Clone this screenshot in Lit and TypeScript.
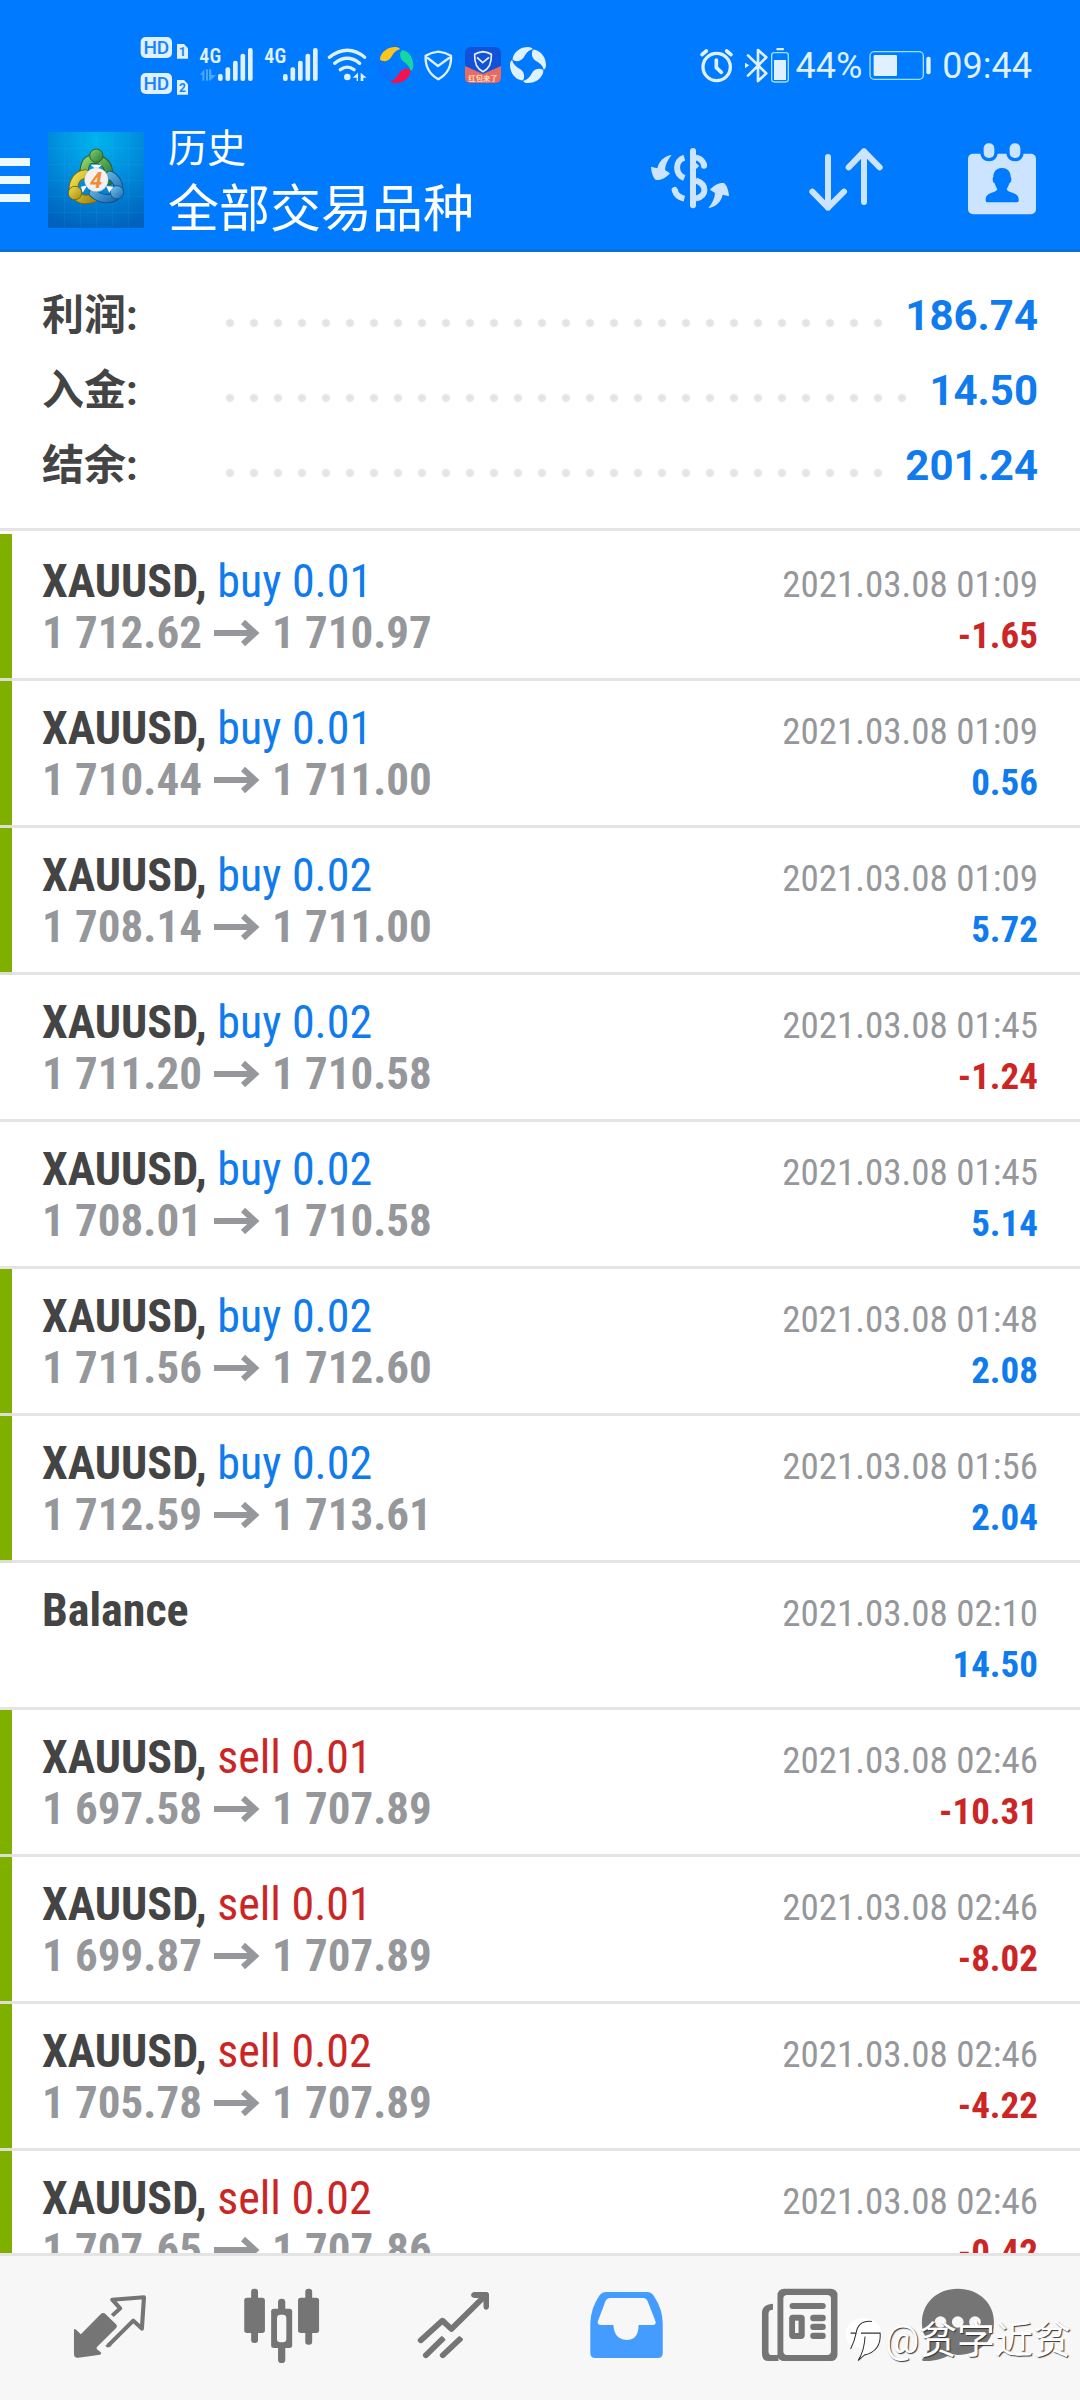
import { LitElement, html, svg, css, nothing } from "lit";
import { customElement, property } from "lit/decorators.js";
import { classMap } from "lit/directives/class-map.js";

interface Deal {
  symbol: string;
  side?: "buy" | "sell";
  volume?: string;
  open?: string;
  close?: string;
  time: string;
  profit: string;
  marked: boolean;
}

const trade = (
  side: "buy" | "sell", volume: string, open: string, close: string,
  time: string, profit: string, marked = true,
): Deal => ({ symbol: "XAUUSD", side, volume, open, close, time: `2021.03.08 ${time}`, profit, marked });

const DEALS: Deal[] = [
  trade("buy", "0.01", "1 712.62", "1 710.97", "01:09", "-1.65"),
  trade("buy", "0.01", "1 710.44", "1 711.00", "01:09", "0.56"),
  trade("buy", "0.02", "1 708.14", "1 711.00", "01:09", "5.72"),
  trade("buy", "0.02", "1 711.20", "1 710.58", "01:45", "-1.24", false),
  trade("buy", "0.02", "1 708.01", "1 710.58", "01:45", "5.14", false),
  trade("buy", "0.02", "1 711.56", "1 712.60", "01:48", "2.08"),
  trade("buy", "0.02", "1 712.59", "1 713.61", "01:56", "2.04"),
  { symbol: "Balance", time: "2021.03.08 02:10", profit: "14.50", marked: false },
  trade("sell", "0.01", "1 697.58", "1 707.89", "02:46", "-10.31"),
  trade("sell", "0.01", "1 699.87", "1 707.89", "02:46", "-8.02"),
  trade("sell", "0.02", "1 705.78", "1 707.89", "02:46", "-4.22"),
  trade("sell", "0.02", "1 707.65", "1 707.86", "02:46", "-0.42"),
];

const TOTALS: [string, string][] = [
  ["利润:", "186.74"],
  ["入金:", "14.50"],
  ["结余:", "201.24"],
];

/* Five rising signal bars, the first one starting at x. */
const bars = (x: number) => [[162, 21], [142, 41], [122, 61], [101, 82], [84, 99]].map(
  ([y, h], i) => svg`<rect x=${x + i * 22.5} y=${y} width="14" height=${h} rx="6"/>`);

const blade = (cx: number, cy: number, angle: number, fill: string) => svg`
  <path transform="translate(${cx} ${cy}) rotate(${angle})" fill=${fill}
    d="M-46 -20 C-42 -40 -22 -54 0 -54 C8 -54 14 -51 14 -47 C0 -44 -6 -34 -12 -24 C-18 -14 -28 -10 -38 -12 C-44 -13 -47 -16 -46 -20Z"/>`;

@customElement("status-bar")
class StatusBar extends LitElement {
  static styles = css`
    :host { display: block; }
    .bar { display: flex; align-items: center; height: 108px; padding: 0 48px 0 138px; color: #dff0ff; }
    svg { display: block; flex: none; height: 108px; fill: currentColor; }
    .hd { width: 54px; }
    .signal { width: 65px; }
    .wide { width: 48px; }
    .shield { width: 40px; }
    .alarm, .last { width: 44px; }
    .bt { width: 49px; }
    .battery { width: 63px; }
    .right { display: flex; align-items: center; margin-left: auto; }
    .text { font: 36px/42px Roboto, sans-serif; padding-top: 24px; }
    .pct { margin: 0 7px 0 5px; }
    .clock { margin-left: 10px; }
    .label { font-family: Roboto, sans-serif; }
    .narrow { font-family: "Roboto Condensed", Roboto, sans-serif; }
    .line { fill: none; stroke: currentColor; stroke-linecap: round; stroke-linejoin: round; }
  `;

  render() {
    return html`<div class="bar">
      <svg class="hd" viewBox="54 -60 162 324" aria-hidden="true">
        ${[0, 108].map((dy, i) => svg`
          <rect x="62" y=${51 + dy} width="94" height="63" rx="15"/>
          <text class="label" x="109" y=${103 + dy} text-anchor="middle" font-size="57" font-weight="500" fill="#1684ff">HD</text>
          <path d="M171 ${72 + dy} H192 L204 ${85 + dy} V${116 + dy} H171Z"/>
          <text class="label" x="187" y=${109 + dy} text-anchor="middle" font-size="36" font-weight="700" fill="#1684ff">${i + 1}</text>`)}
      </svg>
      <svg class="signal" viewBox="216 -60 195 324" aria-hidden="true">
        <text class="narrow" x="238" y="128" font-size="60" font-weight="600">4G</text>
        <path fill="#4aa6ff" d="M240 164 L253 148 V182 H247 V164Z M258 148 H264 V182 H258Z M267 148 H274 V164 L288 166 L270 182 H267Z"/>
        ${bars(294)}
      </svg>
      <svg class="signal" viewBox="411 -60 195 324" aria-hidden="true">
        <text class="narrow" x="433" y="128" font-size="60" font-weight="600">4G</text>
        ${bars(489)}
      </svg>
      <svg class="wide" viewBox="606 -60 144 324" aria-hidden="true">
        <path class="line" stroke-width="10" d="M628 112 Q683 70 734 112 M644 130 Q682 100 719 130 M661 149 Q682 134 702 149"/>
        <circle cx="682" cy="171" r="10"/>
        <path d="M698 173 L714 158 V183 L710 183 V173Z M722 158 L740 173 H730 V183 H722Z"/>
      </svg>
      <svg class="wide" viewBox="60 -60 144 324" aria-hidden="true">
        ${blade(136, 135, 0, "#ffc61a")}${blade(136, 135, 95, "#16d7a2")}${blade(136, 135, 180, "#f5114c")}${blade(136, 135, 270, "#0a72ff")}
      </svg>
      <svg class="shield" viewBox="204 -60 120 324" aria-hidden="true">
        <path class="line" stroke-width="7" d="M265 95 Q244 97 227 107 Q224 155 265 178 Q306 155 303 107 Q286 97 265 95Z M233 114 L264 138 L297 114"/>
      </svg>
      <svg class="wide" viewBox="324 -60 144 324" aria-hidden="true">
        <rect x="345" y="81" width="108" height="108" rx="17" fill="#1152d8"/>
        <path fill="#e56b68" d="M345 138 L399 162 L453 138 V172 Q453 189 436 189 H362 Q345 189 345 172Z"/>
        <path fill="none" stroke="#e9f3ff" stroke-width="5" d="M399 95 Q384 97 374 103 Q372 142 399 155 Q426 142 424 103 Q414 97 399 95Z M381 112 L398 128 L417 112"/>
        <text x="399" y="184" text-anchor="middle" font-size="22" font-weight="700" font-family="Noto Sans CJK SC" fill="#ffd9a8">红包来了</text>
      </svg>
      <svg class="last" viewBox="468 -60 132 324" aria-hidden="true">
        ${[0, 90, 180, 270].map((a) => blade(534, 135, a, "#dff0ff"))}
      </svg>
      <div class="right">
        <svg class="alarm" viewBox="54 -60 132 324" aria-hidden="true">
          <g class="line" stroke-width="10">
            <circle cx="110" cy="141" r="41"/>
            <path stroke-width="11" d="M109 120 V143 L124 157 M66 104 L79 93 M140 93 L153 104"/>
          </g>
        </svg>
        <svg class="bt" viewBox="186 -60 147 324" aria-hidden="true">
          <path class="line" stroke-width="8" d="M204 106 L259 160 L234 183 V90 L259 112 L204 167"/>
          <path d="M195 128 L208 136 L195 145Z"/>
          <rect x="275" y="98" width="50" height="88" rx="8" fill="none" stroke="#9ee0ff" stroke-width="4"/>
          <rect x="289" y="84" width="23" height="7" rx="3"/>
          <rect x="282" y="120" width="36" height="60"/>
        </svg>
        <span class="text pct">44%</span>
        <svg class="battery" viewBox="570 -60 189 324" aria-hidden="true">
          <rect x="573" y="95" width="160" height="83" rx="13" fill="none" stroke="#9ee0ff" stroke-width="4"/>
          <rect x="584" y="105" width="70" height="63" rx="4"/>
          <rect x="742" y="110" width="13" height="53" rx="6"/>
        </svg>
        <time class="text clock">09:44</time>
      </div>
    </div>`;
  }
}

@customElement("app-header")
class AppHeader extends LitElement {
  static styles = css`
    :host { display: block; }
    .header { display: flex; align-items: center; box-sizing: border-box; height: 144px; padding-top: 3px; border-bottom: 3px solid #0d6fdc; color: #fff; }
    button { display: flex; align-items: center; justify-content: center; margin: 0; padding: 0; border: 0; background: none; color: #cce4ff; }
    .menu { width: 48px; height: 96px; flex-direction: column; align-items: flex-start; gap: 10px; }
    .stripe { width: 30px; height: 8px; background: #eef9ff; }
    .logo { display: block; width: 96px; height: 96px; }
    .titles { margin-left: 24px; padding-top: 5px; flex: 1; font-family: Roboto, "Noto Sans CJK SC", sans-serif; }
    h1, p { margin: 0; font-weight: 400; }
    h1 { font-size: 39px; line-height: 54px; }
    p { font-size: 51px; line-height: 68px; }
    .action { width: 156px; height: 138px; }
    .action svg { width: 96px; height: 96px; fill: currentColor; }
    .line { fill: none; stroke: currentColor; stroke-width: 18; stroke-linecap: round; stroke-linejoin: round; }
    .butt { stroke-linecap: butt; }
  `;

  render() {
    const swoosh = "M155 105 C132 108 116 125 112 145 L93 140 C94 155 98 172 108 180 C122 182 138 174 150 160 L135 150 C136 135 142 120 155 105Z";
    return html`<header class="header">
      <button class="menu" aria-label="菜单"><span class="stripe"></span><span class="stripe"></span><span class="stripe"></span></button>
      <svg class="logo" viewBox="144 66 288 288" aria-hidden="true">
        <defs>
          <radialGradient id="sky" cx=".5" cy=".08" r=".95">
            <stop offset="0" stop-color="#00b4ee"/><stop offset=".45" stop-color="#0090de"/><stop offset="1" stop-color="#0062bd"/>
          </radialGradient>
          <linearGradient id="g" x1="0" y1="0" x2="1" y2="1"><stop offset="0" stop-color="#8fd06c"/><stop offset="1" stop-color="#1f7a33"/></linearGradient>
          <linearGradient id="y" x1="0" y1="0" x2="1" y2="1"><stop offset="0" stop-color="#f0e04c"/><stop offset="1" stop-color="#a58b10"/></linearGradient>
          <linearGradient id="b" x1="0" y1="0" x2="1" y2="1"><stop offset="0" stop-color="#7cc8f4"/><stop offset="1" stop-color="#1468ac"/></linearGradient>
        </defs>
        <rect x="144" y="66" width="288" height="288" fill="url(#sky)"/>
        <path stroke="#5fd0ff" stroke-opacity=".14" stroke-width="2" d="M193 66V354M241 66V354M289 66V354M337 66V354M385 66V354M144 115H432M144 163H432M144 211H432M144 259H432M144 307H432"/>
        <g fill="none" stroke-width="22" stroke-linecap="round">
          <path stroke="#27612c" stroke-width="28" d="M252 188 C254 146 272 146 289 148 C318 152 330 170 326 212"/>
          <path stroke="url(#g)" d="M252 188 C254 146 272 146 289 148 C318 152 330 170 326 212"/>
          <path stroke="#7d6b12" stroke-width="28" d="M256 192 C226 196 216 226 222 246 C234 270 256 272 280 264"/>
          <path stroke="url(#y)" d="M256 192 C226 196 216 226 222 246 C234 270 256 272 280 264"/>
          <path stroke="#12538c" stroke-width="28" d="M330 196 C352 206 362 232 352 252 C338 272 302 270 280 250"/>
          <path stroke="url(#b)" d="M330 196 C352 206 362 232 352 252 C338 272 302 270 280 250"/>
        </g>
        <circle cx="289" cy="137" r="20" fill="url(#g)" stroke="#27612c" stroke-width="3"/>
        <circle cx="225" cy="249" r="20" fill="url(#y)" stroke="#7d6b12" stroke-width="3"/>
        <circle cx="351" cy="247" r="20" fill="url(#b)" stroke="#12538c" stroke-width="3"/>
        <path fill="#fff" d="M272 164 H306 L289 180Z M243 230 L262 226 L248 248Z M318 228 L340 230 L328 248Z"/>
        <circle cx="289" cy="209" r="36" fill="#f1f1f1" stroke="#666" stroke-opacity=".4" stroke-width="2"/>
        <text x="288" y="233" text-anchor="middle" font-family="Roboto, sans-serif" font-style="italic" font-weight="700" font-size="66" fill="#f08c35">4</text>
      </svg>
      <div class="titles"><h1>历史</h1><p>全部交易品种</p></div>
      <button class="action" aria-label="交易品种">
        <svg viewBox="66 36 288 288" aria-hidden="true">
          <path d=${swoosh}/><path d=${swoosh} transform="rotate(180 210 184.500)"/>
          <rect x="210" y="84" width="18" height="181" rx="9"/>
          <g class="line">
            <path class="butt" d="M193 113 C164 122 164 162 193 174 M227 112 C240 115 250 122 252 136 M227 181 C262 194 262 226 227 236 M164 210 C168 226 180 233 193 236"/>
            <path d="M252 134 V137 M164 210 L165 212"/>
          </g>
          <path d="M227 128 L238 138 L227 148Z"/>
        </svg>
      </button>
      <button class="action" aria-label="排序">
        <svg viewBox="534 36 288 288" aria-hidden="true">
          <path class="line" d="M624 111 V263 M577 215 L624 263 L672 215 M732 246 V94 M686 142 L732 94 L779 142"/>
        </svg>
      </button>
      <button class="action" aria-label="日期">
        <svg viewBox="1002 36 288 288" aria-hidden="true">
          <rect x="1044" y="101" width="204" height="182" rx="15"/>
          <g stroke="#007aff" stroke-width="20" paint-order="stroke">
            <rect x="1091" y="70" width="32" height="44" rx="15"/><rect x="1169" y="70" width="32" height="44" rx="15"/>
          </g>
          <path fill="#007aff" d="M1146 144 C1165 144 1172 158 1172 170 C1176 176 1174 186 1168 190 C1166 198 1162 203 1160 208 C1164 220 1196 216 1196 238 V242 Q1196 247 1190 247 H1103 Q1097 247 1097 242 V238 C1097 216 1128 220 1132 208 C1130 203 1126 198 1124 190 C1118 186 1116 176 1120 170 C1120 158 1127 144 1146 144Z"/>
        </svg>
      </button>
    </header>`;
  }
}

@customElement("deal-row")
class DealRow extends LitElement {
  @property({ attribute: false }) deal!: Deal;

  static styles = css`
    :host { display: block; font-family: "Roboto Condensed", "Liberation Sans Narrow", Roboto, sans-serif; }
    .row { display: flex; justify-content: space-between; box-sizing: border-box; height: 147px; padding: 22px 42px 0; border-bottom: 3px solid rgba(226, 226, 226, 0.93); }
    .marked { background: linear-gradient(#7fb000, #7fb000) 0 0 / 12px 100% repeat-y; }
    .main, .side { display: flex; flex-direction: column; }
    .side { align-items: flex-end; padding-top: 3px; }
    .title, .prices { line-height: 51px; white-space: nowrap; }
    .title { font-size: 46px; color: #0f7bee; }
    .title b { color: #444; }
    .prices { display: flex; align-items: center; gap: 12px; font-size: 45px; font-weight: 700; color: #95979b; }
    .arrow { display: block; width: 46px; height: 26px; fill: none; stroke: currentColor; stroke-width: 6; }
    .time, .profit { font-size: 37px; line-height: 51px; white-space: nowrap; }
    .time { color: #95979b; }
    .profit { font-weight: 700; color: #0f7bee; }
    .title.sell, .profit.loss { color: #cc2525; }
  `;

  render() {
    const d = this.deal;
    return html`<article class=${classMap({ row: true, marked: d.marked })}>
      <div class="main">
        <div class=${classMap({ title: true, sell: d.side === "sell" })}>
          <b>${d.symbol}${d.side ? "," : ""}</b>${d.side ? html` ${d.side} ${d.volume}` : nothing}
        </div>
        ${d.open ? html`<div class="prices">
          <span>${d.open}</span>
          <svg class="arrow" viewBox="0 0 46 26" role="img" aria-label="→"><path d="M0 13 H42 M29 2 L41 13 L29 24"/></svg>
          <span>${d.close}</span>
        </div>` : nothing}
      </div>
      <div class="side">
        <time class="time">${d.time}</time>
        <span class=${classMap({ profit: true, loss: d.profit.startsWith("-") })}>${d.profit}</span>
      </div>
    </article>`;
  }
}

@customElement("tab-bar")
class TabBar extends LitElement {
  static styles = css`
    :host { display: block; flex: none; }
    .tabs { display: grid; grid-template-columns: repeat(6, 1fr); padding: 0 24px; background: #f7f7f7; border-top: 3px solid #e4e4e4; }
    .tab { display: flex; align-items: center; justify-content: center; height: 144px; margin: 0; padding: 0; border: 0; background: none; color: #757575; }
    .active { color: #459cff; }
    svg { display: block; width: 90px; height: 90px; overflow: visible; fill: currentColor; }
    .line { fill: none; stroke: currentColor; stroke-linejoin: round; }
    .round { stroke-linecap: round; }
    .hole { fill: #f7f7f7; }
  `;

  private tabs = [
    { label: "行情", box: "189 309 261 270", art: svg`
      <path d="M299 399 Q304 399 307 403 L337 433 Q342 439 338 443 L281 502 V507 L293 517 Q296 522 290 524 L228 533 Q215 535 215 521 V450 Q216 445 221 449 L235 463 L293 402 Q296 399 299 399Z"/>
      <path class="line" stroke-width="12" stroke-linejoin="miter" d="M326 407 L349 385 L326 359 L418 352 L412 446 L387 422 L315 496"/>
      <path d="M306 497 L316 488 L324 497 Q318 503 311 502Z"/>` },
    { label: "图表", box: "688 309 261 270", art: svg`
      <rect x="729" y="326" width="20" height="163" rx="9"/><rect x="709" y="353" width="60" height="106" rx="8"/>
      <rect x="807" y="356" width="21" height="193" rx="10"/><rect x="787" y="386" width="61" height="118" rx="8"/>
      <rect x="886" y="326" width="20" height="168" rx="9"/><rect x="865" y="353" width="61" height="106" rx="8"/>
      <rect class="hole" x="804" y="404" width="27" height="83" rx="10"/>` },
    { label: "交易", box: "1188 309 261 270", art: svg`
      <path class="line round" stroke-width="17" d="M1222 481 L1285 422 L1311 447 L1411 345 M1237 526 L1285 477 M1286 526 L1336 477"/>
      <path d="M1378 336 H1411 Q1420 336 1420 346 V380 Q1419 389 1411 389 Q1404 388 1404 380 V354 H1378 Q1368 352 1368 345 Q1369 337 1378 336Z"/>
      <path class="hole" d="M1279 463 L1296 480 L1302 466 L1290 459Z M1330 463 L1348 480 L1354 466 L1340 459Z"/>` },
    { label: "历史", box: "119 309 261 270", active: true, art: svg`
      <path d="M192 336 H311 Q322 336 330 347 Q356 388 356 430 V519 Q356 534 342 534 H160 Q146 534 146 519 V430 Q147 385 172 347 Q180 336 192 336Z"/>
      <path class="hole" d="M204 354 H298 Q308 354 312 363 L335 424 Q338 435 327 435 H286 Q286 480 251 480 Q215 478 213 435 H178 Q165 435 168 424 L189 366 Q193 354 204 354Z"/>` },
    { label: "新闻", box: "619 309 261 270", art: svg`
      <path d="M677 371 V389 Q664 389 664 401 V515 Q664 525 675 525 H693 V543 H664 Q645 543 645 521 V397 Q646 372 677 371Z"/>
      <rect x="690" y="326" width="174" height="217" rx="19"/>
      <rect class="hole" x="707" y="345" width="138" height="180" rx="11"/>
      <rect x="725" y="369" width="105" height="18" rx="9"/><rect x="724" y="404" width="45" height="73" rx="11"/><rect class="hole" x="741" y="422" width="10" height="37"/>
      <rect x="785" y="404" width="45" height="20" rx="9"/><rect x="785" y="431" width="45" height="19" rx="9"/><rect x="785" y="458" width="45" height="19" rx="9"/>` },
    { label: "消息", box: "1118 309 261 270", art: svg`
      <path d="M1213 326 C1275 326 1318 370 1318 426 C1318 484 1272 525 1214 525 C1206 525 1200 524 1192 523 C1170 538 1142 545 1113 543 Q1106 541 1113 534 Q1130 514 1132 488 C1118 473 1109 452 1109 428 C1109 370 1152 326 1213 326Z"/>
      <circle class="hole" cx="1163" cy="426" r="17"/><circle class="hole" cx="1213" cy="426" r="17"/><circle class="hole" cx="1263" cy="426" r="17"/>` },
  ];

  render() {
    return html`<nav class="tabs">${this.tabs.map((t) => html`
      <button class=${classMap({ tab: true, active: !!t.active })} aria-label=${t.label}>
        <svg viewBox=${t.box} preserveAspectRatio="none" aria-hidden="true">${t.art}</svg>
      </button>`)}</nav>`;
  }
}

@customElement("app-root")
class AppRoot extends LitElement {
  static styles = css`
    :host { display: block; }
    .app { position: relative; display: flex; flex-direction: column; height: 100vh; overflow: hidden; background: #fff; }
    .top { flex: none; background: #007aff; }
    .summary { flex: none; margin: 0; padding: 26px 42px 25px; border-bottom: 3px solid #e4e4e4; font-family: Roboto, "Noto Sans CJK SC", sans-serif; font-size: 42px; font-weight: 700; line-height: 75px; }
    .total { display: flex; align-items: center; }
    dt { width: 176px; color: #444; }
    dd { flex: 1; display: flex; align-items: center; gap: 14px; margin: 0; color: #0f7bee; }
    .dots { flex: 1; height: 75px; background: radial-gradient(circle at 12px 45px, #e4e4e4 3px, transparent 5px) repeat-x; background-size: 24px 75px; }
    .list { flex: 1; min-height: 0; overflow: hidden; margin: 0; padding: 3px 0 0; list-style: none; }
    .mark { position: absolute; right: 9px; bottom: 33px; display: flex; align-items: center; gap: 2px; color: #fff; font: 38px/54px Roboto, "Noto Sans CJK SC", sans-serif; text-shadow: 1px 1px 1px #333; pointer-events: none; }
    .mark svg { width: 38px; height: 44px; overflow: visible; }
  `;

  render() {
    return html`<div class="app">
      <div class="top"><status-bar></status-bar><app-header></app-header></div>
      <dl class="summary">${TOTALS.map(([label, value]) => html`
        <div class="total"><dt>${label}</dt><dd><span class="dots"></span>${value}</dd></div>`)}
      </dl>
      <ul class="list">${DEALS.map((deal) => html`<li><deal-row .deal=${deal}></deal-row></li>`)}</ul>
      <tab-bar></tab-bar>
      <div class="mark">
        <svg viewBox="876 424 110 128" aria-hidden="true">
          <path fill="#fff" d="M930 425 C962 425 982 446 982 472 C982 505 950 532 914 548 C922 534 926 524 928 512 C896 515 878 494 878 470 C878 445 900 425 930 425Z"/>
          <path fill="none" stroke="#333" stroke-width="3" d="M892 514 Q904 490 908 468 H892 M908 468 Q914 430 954 434 M922 468 H978 Q982 520 932 532 L914 548 Q932 520 934 478"/>
        </svg>
        <span>@贫字近贫</span>
      </div>
    </div>`;
  }
}
